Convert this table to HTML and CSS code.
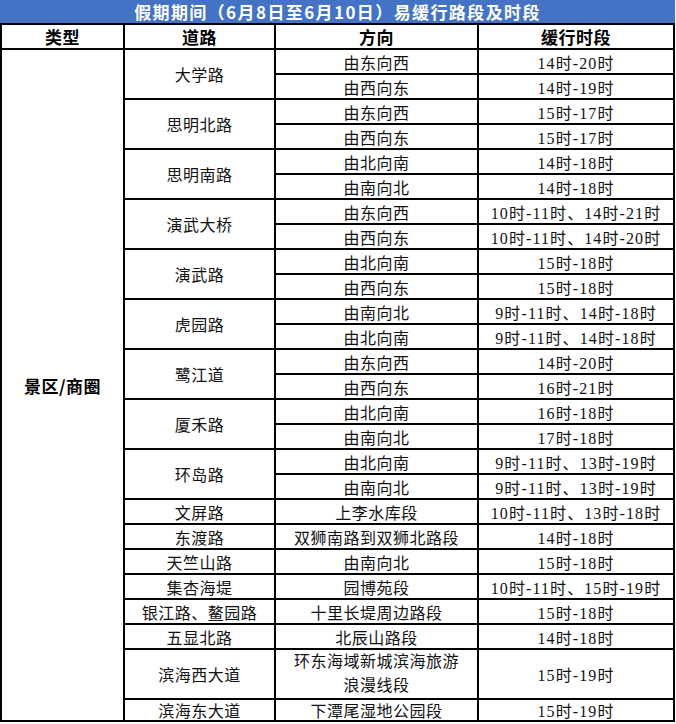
FILE: index.html
```html
<!DOCTYPE html>
<html lang="zh-CN">
<head>
<meta charset="utf-8">
<title>易缓行路段及时段</title>
<link rel="stylesheet" href="styles.css">
</head>
<body>
<div class="sheet">
  <div class="title">假期期间（6月8日至6月10日）易缓行路段及时段</div>
  <div class="grid">
    <div class="cell head">类型</div>
    <div class="cell head">道路</div>
    <div class="cell head">方向</div>
    <div class="cell head">缓行时段</div>

    <div class="cell type">景区/商圈</div>

    <div class="cell road span2">大学路</div>
    <div class="cell">由东向西</div><div class="cell t">14时-20时</div>
    <div class="cell">由西向东</div><div class="cell t">14时-19时</div>

    <div class="cell road span2">思明北路</div>
    <div class="cell">由东向西</div><div class="cell t">15时-17时</div>
    <div class="cell">由西向东</div><div class="cell t">15时-17时</div>

    <div class="cell road span2">思明南路</div>
    <div class="cell">由北向南</div><div class="cell t">14时-18时</div>
    <div class="cell">由南向北</div><div class="cell t">14时-18时</div>

    <div class="cell road span2">演武大桥</div>
    <div class="cell">由东向西</div><div class="cell t">10时-11时、14时-21时</div>
    <div class="cell">由西向东</div><div class="cell t">10时-11时、14时-20时</div>

    <div class="cell road span2">演武路</div>
    <div class="cell">由北向南</div><div class="cell t">15时-18时</div>
    <div class="cell">由西向东</div><div class="cell t">15时-18时</div>

    <div class="cell road span2">虎园路</div>
    <div class="cell">由南向北</div><div class="cell t">9时-11时、14时-18时</div>
    <div class="cell">由北向南</div><div class="cell t">9时-11时、14时-18时</div>

    <div class="cell road span2">鹭江道</div>
    <div class="cell">由东向西</div><div class="cell t">14时-20时</div>
    <div class="cell">由西向东</div><div class="cell t">16时-21时</div>

    <div class="cell road span2">厦禾路</div>
    <div class="cell">由北向南</div><div class="cell t">16时-18时</div>
    <div class="cell">由南向北</div><div class="cell t">17时-18时</div>

    <div class="cell road span2">环岛路</div>
    <div class="cell">由北向南</div><div class="cell t">9时-11时、13时-19时</div>
    <div class="cell">由南向北</div><div class="cell t">9时-11时、13时-19时</div>

    <div class="cell road">文屏路</div>
    <div class="cell">上李水库段</div><div class="cell t">10时-11时、13时-18时</div>

    <div class="cell road">东渡路</div>
    <div class="cell">双狮南路到双狮北路段</div><div class="cell t">14时-18时</div>

    <div class="cell road">天竺山路</div>
    <div class="cell">由南向北</div><div class="cell t">15时-18时</div>

    <div class="cell road">集杏海堤</div>
    <div class="cell">园博苑段</div><div class="cell t">10时-11时、15时-19时</div>

    <div class="cell road">银江路、鳌园路</div>
    <div class="cell">十里长堤周边路段</div><div class="cell t">15时-18时</div>

    <div class="cell road">五显北路</div>
    <div class="cell">北辰山路段</div><div class="cell t">14时-18时</div>

    <div class="cell road span2">滨海西大道</div>
    <div class="cell span2 twoline">环东海域新城滨海旅游<br>浪漫线段</div>
    <div class="cell span2 t">15时-19时</div>

    <div class="cell road">滨海东大道</div>
    <div class="cell">下潭尾湿地公园段</div><div class="cell t">15时-19时</div>
  </div>
</div>
</body>
</html>
```

FILE: styles.css
```css
html, body {
  margin: 0;
  padding: 0;
  background: #ffffff;
}

.sheet {
  width: 675px;
}

.title {
  height: 23px;
  background: #4472c4;
  color: #ffffff;
  font-family: "Noto Sans CJK SC", sans-serif;
  font-weight: 700;
  font-size: 17px;
  letter-spacing: 1.4px;
  line-height: 23px;
  text-align: center;
}

.grid {
  display: grid;
  grid-template-columns: 121px 149px 201px 194px;
  grid-template-rows: 23px repeat(26, 23px) 20px;
  gap: 2px;
  padding: 2px;
  background: #000000;
}

.cell {
  background: #ffffff;
  display: flex;
  align-items: center;
  justify-content: center;
  text-align: center;
  font-family: "Liberation Serif", "Noto Sans CJK SC", serif;
  font-size: 16px;
  letter-spacing: 0.5px;
  color: #111111;
  white-space: nowrap;
}

.t {
  letter-spacing: 1.1px;
}

.head {
  font-family: "Noto Sans CJK SC", sans-serif;
  font-weight: 700;
  font-size: 17px;
  color: #000000;
}

.type {
  grid-row: span 27;
  font-family: "Noto Sans CJK SC", sans-serif;
  font-weight: 700;
  font-size: 17px;
  color: #000000;
}

.span2 {
  grid-row: span 2;
}

.twoline {
  line-height: 24px;
}
```
